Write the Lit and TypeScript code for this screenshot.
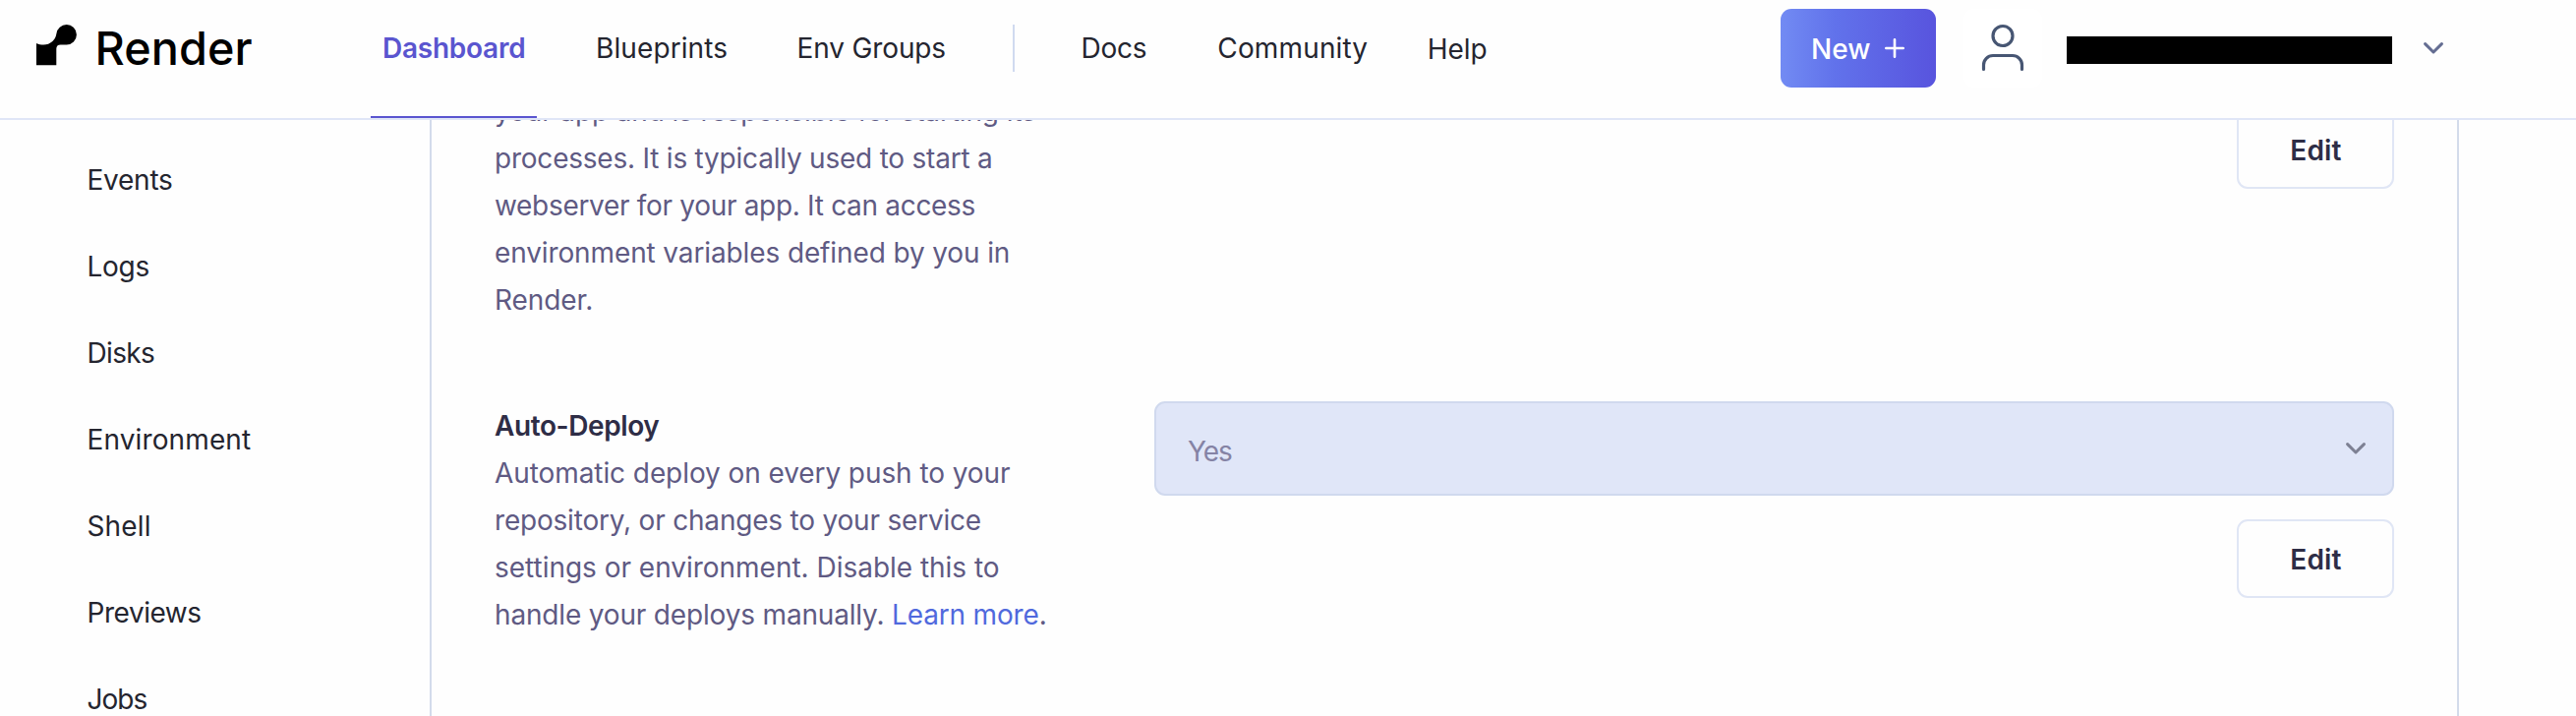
import { LitElement, html, css } from 'lit';
import { customElement } from 'lit/decorators.js';

type Label = [text: string, tracking: number];

const PRIMARY: Label[] = [['Blueprints', 0.1], ['Env Groups', -0.15]];
const SECONDARY: Label[] = [['Docs', -0.25], ['Community', 0.15]];
const HELP: Label = ['Help', -0.1];
const SIDEBAR: Label[] = [
  ['Events', -0.25], ['Logs', -0.25], ['Disks', -0.65], ['Environment', 0.12],
  ['Shell', 0.15], ['Previews', -0.45], ['Jobs', -1],
];
const START_COMMAND: Label[] = [
  ['your app and is responsible for starting its', -0.13],
  ['processes. It is typically used to start a', -0.22],
  ['webserver for your app. It can access', -0.31],
  ['environment variables defined by you in', -0.12],
  ['Render.', -0.1],
];
const AUTO_DEPLOY: Label[] = [
  ['Automatic deploy on every push to your', -0.08],
  ['repository, or changes to your service', -0.2],
  ['settings or environment. Disable this to', -0.02],
];

const track = ([text, spacing]: Label, cls: string) =>
  html`<span class=${cls} style="letter-spacing:${spacing}px">${text}</span>`;

const chevron = (cls: string) => html`
  <svg class=${cls} width="20" height="12" viewBox="0 0 20 12" fill="none">
    <path d="M1.6 1.6 10 10 18.4 1.6" stroke="currentColor" stroke-width="3"
      stroke-linecap="round" stroke-linejoin="round" />
  </svg>`;

@customElement('top-bar')
class TopBar extends LitElement {
  static styles = css`
    :host { display: block; flex: none; }
    .bar {
      box-sizing: border-box; height: 122px; display: flex; align-items: flex-start;
      background: #fefefe; border-bottom: 2px solid #e0e6f7; padding-left: 37px;
    }
    .logo { display: flex; width: 340px; height: 120px; }
    .mark { margin-top: 25px; flex: none; }
    .word { margin: 19px 0 0 17.5px; font-size: 46.75px; line-height: 60px; font-weight: 500; letter-spacing: 0.1px; color: #000; }
    .nav { display: flex; height: 120px; color: #24252f; }
    .link, .active, .help { line-height: 48px; padding-top: 25px; white-space: nowrap; }
    .active {
      box-sizing: border-box; width: 169px; height: 120px; padding-left: 12px;
      font-weight: 600; letter-spacing: -0.25px; color: #5a55cf; border-bottom: 2px solid #5a55cf;
    }
    .primary { display: flex; gap: 70.5px; width: 356px; margin-left: 60px; }
    .rule { width: 2px; height: 48px; margin: 25px 0 0 68px; background: #d0daf0; }
    .secondary { display: flex; gap: 72px; margin-left: 67.5px; }
    .help { padding-top: 26px; margin-left: 60.5px; }
    .tools { display: flex; margin-left: auto; margin-right: 135px; align-items: flex-start; }
    .new {
      box-sizing: border-box; width: 158px; height: 80px; margin-top: 9px; border-radius: 11px;
      display: flex; align-items: center; padding-left: 31px; color: #fff; font-weight: 500;
      background: linear-gradient(90deg, #728bf3 0%, #6172eb 35%, #5d64e5 65%, #5854de 100%);
    }
    .caption { width: 61px; padding-top: 2px; }
    .plus { margin-left: 14px; }
    .user {
      width: 80px; height: 80px; margin: 9px 0 0 28px; border-radius: 11px;
      display: flex; color: #475673; background: #fff;
    }
    .redacted { width: 331px; height: 28px; margin: 37px 0 0 25px; background: #000; }
    .caret { margin: 43px 0 0 32px; color: #646d92; }
  `;
  render() {
    return html`
      <header class="bar">
        <div class="logo">
          <svg class="mark" width="42" height="42" viewBox="0 0 42 42">
            <path d="M30.700 0.100a10.200 10.200 0 0 1 0 20.400H24.500C21.800 20.500 20.300 22 20.300 24.700V41.300H0V19C2.200 20.200 4.600 20.600 7.300 20.600C14.200 20.600 19.600 15.500 20.400 9.300A10.300 10.300 0 0 1 30.700 0.100Z" fill="#000" />
          </svg>
          <div class="word">Render</div>
        </div>
        <nav class="nav">
          <span class="active">Dashboard</span>
          <div class="primary">${PRIMARY.map((l) => track(l, 'link'))}</div>
          <div class="rule"></div>
          <div class="secondary">${SECONDARY.map((l) => track(l, 'link'))}</div>
          ${track(HELP, 'help')}
        </nav>
        <div class="tools">
          <div class="new"><span class="caption">New</span>
            <svg class="plus" width="20" height="20" viewBox="0 0 20 20">
              <path d="M10 1.300V18.700M1.300 10H18.700" stroke="#fff" stroke-width="2.600" stroke-linecap="round" />
            </svg>
          </div>
          <div class="user">
            <svg width="80" height="80" viewBox="0 0 80 80" fill="none" stroke="currentColor" stroke-width="3.200" stroke-linecap="round">
              <circle cx="40" cy="27.500" r="10" />
              <path d="M20.500 61.500V57A9.500 9.500 0 0 1 30 47.500H50A9.500 9.500 0 0 1 59.500 57V61.500" />
            </svg>
          </div>
          <div class="redacted"></div>
          ${chevron('caret')}
        </div>
      </header>`;
  }
}

@customElement('side-nav')
class SideNav extends LitElement {
  static styles = css`
    :host { display: block; flex: none; width: 437px; }
    .list { display: flex; flex-direction: column; gap: 40px; padding: 37px 0 0 88.5px; }
    .item { line-height: 48px; color: #24252f; white-space: nowrap; }
  `;
  render() {
    return html`<nav class="list">${SIDEBAR.map((l) => track(l, 'item'))}</nav>`;
  }
}

@customElement('settings-panel')
class SettingsPanel extends LitElement {
  static styles = css`
    :host { display: block; flex: none; width: 2064px; box-sizing: border-box; border: solid #d3dbeb; border-width: 0 2px; }
    .rows { display: flex; flex-direction: column; gap: 79px; padding: 0 64px; margin-top: -34px; }
    .row { display: grid; grid-template-columns: 671px 1261px; width: 1932px; }
    .copy { padding-top: 1px; color: #5f5a83; }
    .line, .title { display: block; line-height: 48px; height: 48px; white-space: nowrap; }
    .last { letter-spacing: -0.17px; }
    .title { font-weight: 600; letter-spacing: -0.4px; color: #2e2d46; }
    .learn { color: #5069dd; text-decoration: none; }
    .controls { display: flex; flex-direction: column; align-items: flex-end; gap: 24px; }
    .only { padding-top: 24px; }
    .select {
      box-sizing: border-box; width: 1261px; height: 96px; border: 2px solid #d0d9ee; border-radius: 11px;
      background: #e0e6f8; display: flex; justify-content: space-between; padding: 0 27px 0 32px;
      color: #8583a5;
    }
    .value { line-height: 48px; margin-top: 25px; letter-spacing: -1.1px; }
    .caret { margin-top: 40px; color: #7d8093; }
    .edit {
      box-sizing: border-box; width: 160px; height: 80px; border: 2px solid #e0e6f5; border-radius: 11px;
      background: #fefefe; color: #2e2d46; font-family: inherit; font-size: 28px; font-weight: 600; letter-spacing: 0.2px;
      line-height: 48px; padding: 2px 0 0 1px;
    }
  `;
  render() {
    return html`
      <div class="rows">
        <section class="row">
          <div class="copy">${START_COMMAND.map((l) => track(l, 'line'))}</div>
          <div class="controls only"><button class="edit">Edit</button></div>
        </section>
        <section class="row">
          <div class="copy">
            <span class="title">Auto-Deploy</span>
            ${AUTO_DEPLOY.map((l) => track(l, 'line'))}
            <span class="line last">handle your deploys manually. <a class="learn">Learn more</a>.</span>
          </div>
          <div class="controls">
            <div class="select"><span class="value">Yes</span>${chevron('caret')}</div>
            <button class="edit">Edit</button>
          </div>
        </section>
      </div>`;
  }
}

@customElement('app-root')
class AppRoot extends LitElement {
  static styles = css`
    :host {
      display: flex; flex-direction: column; height: 728px; overflow: hidden; background: #fefefe;
      font-family: Inter, "Liberation Sans", sans-serif; font-size: 28px; font-weight: 400;
    }
    .body { display: flex; flex: 1; min-height: 0; overflow: hidden; }
  `;
  render() {
    return html`
      <top-bar></top-bar>
      <div class="body"><side-nav></side-nav><settings-panel></settings-panel></div>`;
  }
}
